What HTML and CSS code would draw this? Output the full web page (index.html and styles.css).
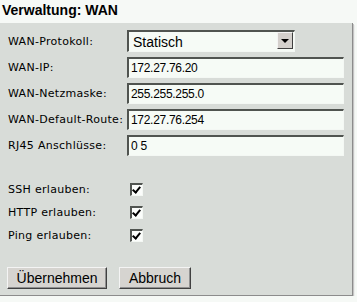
FILE: index.html
```html
<!DOCTYPE html>
<html lang="de">
<head>
    <meta charset="UTF-8">
    <title>Verwaltung: WAN</title>
    <link rel="stylesheet" href="styles.css">
</head>
<body>
    <h1 class="title">Verwaltung: WAN</h1>

    <form class="panel">
        <div class="fields">
            <label for="proto">WAN-Protokoll:</label>
            <div class="select-wrap">
                <select id="proto">
                    <option>Statisch</option>
                    <option>DHCP</option>
                    <option>PPPoE</option>
                </select>
                <span class="select-btn"></span>
            </div>

            <label for="ip">WAN-IP:</label>
            <input type="text" id="ip" value="172.27.76.20">

            <label for="mask">WAN-Netzmaske:</label>
            <input type="text" id="mask" value="255.255.255.0">

            <label for="route">WAN-Default-Route:</label>
            <input type="text" id="route" value="172.27.76.254">

            <label for="rj45">RJ45 Anschlüsse:</label>
            <input type="text" id="rj45" value="0 5">
        </div>

        <div class="checks">
            <label for="ssh">SSH erlauben:</label>
            <input type="checkbox" id="ssh" checked>

            <label for="http">HTTP erlauben:</label>
            <input type="checkbox" id="http" checked>

            <label for="ping">Ping erlauben:</label>
            <input type="checkbox" id="ping" checked>
        </div>

        <div class="buttons">
            <button type="button">Übernehmen</button>
            <button type="button">Abbruch</button>
        </div>
    </form>
</body>
</html>
```

FILE: styles.css
```css
body {
    margin: 0;
    background-color: #f6f9f6;
    font-family: "DejaVu Sans", sans-serif;
    font-size: 11px;
    color: #000;
}

.title {
    margin: 0;
    padding: 2px 0 0 2px;
    height: 21px;
    font-family: "Liberation Sans", sans-serif;
    font-size: 14px;
    font-weight: bold;
}

.panel {
    width: 344px;
    height: 267px;
    margin: 0;
    padding: 5px 0 0 8px;
    background-color: #d8dcd8;
    border-right: 1px solid #8c8c8c;
    border-bottom: 1px solid #8c8c8c;
    box-shadow: 1px 1px 0 #c4c4c4, 2px 2px 0 #eceeec;
}

.fields {
    display: grid;
    grid-template-columns: 119px 217px;
    grid-auto-rows: 26px;
    align-items: center;
}

.fields label, .checks label {
    letter-spacing: 0.3px;
}

.fields input, .fields select {
    box-sizing: border-box;
    height: 21px;
    padding: 0 2px;
    border-style: solid;
    border-width: 2px 1px 1px 2px;
    border-color: #505450 #f4f8f4 #f4f8f4 #505450;
    background-color: #f6fbf6;
    font-family: "Liberation Sans", sans-serif;
    font-size: 12px;
    letter-spacing: -0.3px;
    outline: none;
}

.select-wrap {
    position: relative;
    width: 168px;
}

.fields select {
    width: 168px;
    height: 22px;
    appearance: none;
    -webkit-appearance: none;
    border-radius: 0;
    font-size: 14px;
    letter-spacing: 0;
    padding-left: 4px;
}

.select-btn {
    position: absolute;
    right: 2px;
    top: 2px;
    width: 14px;
    height: 15px;
    background-color: #d4d0cc;
    border: 1px solid;
    border-color: #f4f4f4 #404040 #404040 #f4f4f4;
    pointer-events: none;
}

.select-btn::after {
    content: "";
    position: absolute;
    left: 3px;
    top: 6px;
    border-left: 4px solid transparent;
    border-right: 4px solid transparent;
    border-top: 4px solid #000;
}

.checks {
    display: grid;
    grid-template-columns: 122px 20px;
    grid-auto-rows: 23px;
    align-items: center;
    margin-top: 20px;
}

.checks input {
    appearance: none;
    -webkit-appearance: none;
    position: relative;
    width: 13px;
    height: 13px;
    margin: 0;
    border-style: solid;
    border-width: 2px 1px 1px 2px;
    border-color: #505450 #f4f8f4 #f4f8f4 #505450;
    background-color: #fbfdfb;
}

.checks input:checked::before {
    content: "";
    position: absolute;
    left: 2px;
    top: 0px;
    width: 3px;
    height: 6px;
    border-right: 2px solid #000;
    border-bottom: 2px solid #000;
    transform: rotate(40deg);
}

.buttons {
    display: flex;
    gap: 12px;
    margin-top: 20px;
    margin-left: -1px;
}

.buttons button {
    height: 22px;
    padding: 0 8px;
    background-color: #d6d4d0;
    border: 1px solid;
    border-color: #f4f4f4 #404040 #404040 #f4f4f4;
    box-shadow: inset -1px -1px 0 #909090;
    font-family: "Liberation Sans", sans-serif;
    font-size: 14px;
    color: #000;
}

.buttons button:first-child {
    width: 100px;
}

.buttons button:last-child {
    width: 72px;
}
```
